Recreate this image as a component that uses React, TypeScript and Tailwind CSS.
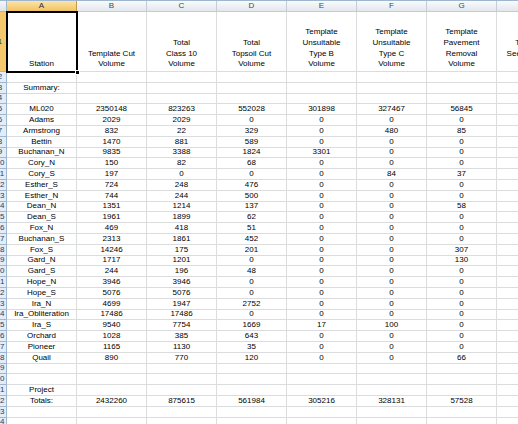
const COLS = ["A", "B", "C", "D", "E", "F", "G", "H"];

const HEADERS: string[][] = [
  ["Station"],
  ["Template Cut", "Volume"],
  ["Total", "Class 10", "Volume"],
  ["Total", "Topsoil Cut", "Volume"],
  ["Template", "Unsuitable", "Type B", "Volume"],
  ["Template", "Unsuitable", "Type C", "Volume"],
  ["Template", "Pavement", "Removal", "Volume"],
  ["Template", "Seed & Mulch", "Area"],
];

const DATA: (string | number)[][] = [
  [],
  ["Summary:"],
  [],
  ["ML020", 2350148, 823263, 552028, 301898, 327467, 56845],
  ["Adams", 2029, 2029, 0, 0, 0, 0],
  ["Armstrong", 832, 22, 329, 0, 480, 85],
  ["Bettin", 1470, 881, 589, 0, 0, 0],
  ["Buchanan_N", 9835, 3388, 1824, 3301, 0, 0],
  ["Cory_N", 150, 82, 68, 0, 0, 0],
  ["Cory_S", 197, 0, 0, 0, 84, 37],
  ["Esther_S", 724, 248, 476, 0, 0, 0],
  ["Esther_N", 744, 244, 500, 0, 0, 0],
  ["Dean_N", 1351, 1214, 137, 0, 0, 58],
  ["Dean_S", 1961, 1899, 62, 0, 0, 0],
  ["Fox_N", 469, 418, 51, 0, 0, 0],
  ["Buchanan_S", 2313, 1861, 452, 0, 0, 0],
  ["Fox_S", 14246, 175, 201, 0, 0, 307],
  ["Gard_N", 1717, 1201, 0, 0, 0, 130],
  ["Gard_S", 244, 196, 48, 0, 0, 0],
  ["Hope_N", 3946, 3946, 0, 0, 0, 0],
  ["Hope_S", 5076, 5076, 0, 0, 0, 0],
  ["Ira_N", 4699, 1947, 2752, 0, 0, 0],
  ["Ira_Obliteration", 17486, 17486, 0, 0, 0, 0],
  ["Ira_S", 9540, 7754, 1669, 17, 100, 0],
  ["Orchard", 1028, 385, 643, 0, 0, 0],
  ["Pioneer", 1165, 1130, 35, 0, 0, 0],
  ["Quail", 890, 770, 120, 0, 0, 66],
  [],
  [],
  ["Project"],
  ["Totals:", 2432260, 875615, 561984, 305216, 328131, 57528],
  [],
  [],
];

function RowHead({ n, selected }: { n: number; selected?: boolean }) {
  return (
    <div
      className={`w-[7px] shrink-0 overflow-hidden border-r border-b border-[#9eb6ce] flex items-center ${
        selected ? "bg-[#f5c96b]" : "bg-[#e4ecf7]"
      }`}
    >
      <div className="w-[14px] -ml-[7px] shrink-0 text-center text-[8px] leading-none text-[#27415f]">{n}</div>
    </div>
  );
}

export default function App() {
  return (
    <div
      className="relative w-[518px] h-[424px] overflow-hidden bg-white text-black"
      style={{ fontFamily: '"Liberation Sans", Arial, sans-serif' }}
    >
      {/* column letters */}
      <div className="flex h-[12px] border-t border-[#9eb6ce]">
        <div className="w-[7px] shrink-0 border-r border-b border-[#9eb6ce] bg-gradient-to-b from-[#f3f5f8] to-[#dfe4eb]" />
        {COLS.map((c, i) => (
          <div
            key={c}
            className={`w-[70px] shrink-0 border-r border-b flex items-center justify-center text-[8px] leading-none ${
              i === 0
                ? "bg-gradient-to-b from-[#fbe4aa] to-[#f2c25f] border-[#c29a4b] text-[#1e2a3a]"
                : "bg-gradient-to-b from-[#f9fafc] to-[#e3e7ed] border-[#c5ccd6] text-[#3b4a5d]"
            }`}
          >
            {c}
          </div>
        ))}
      </div>

      {/* header row 1 */}
      <div className="flex h-[60px]">
        <RowHead n={1} selected />
        {HEADERS.map((lines, i) => (
          <div
            key={i}
            className="w-[70px] shrink-0 border-r border-b border-[#dadcdd] flex flex-col items-center justify-end pb-[1px] text-[8px] leading-[10.7px] whitespace-nowrap"
          >
            {lines.map((l, j) => (
              <span key={j}>{l}</span>
            ))}
          </div>
        ))}
      </div>

      {DATA.map((row, r) => (
        <div key={r} className="flex h-[10.8px]">
          <RowHead n={r + 2} />
          {COLS.map((_, c) => (
            <div
              key={c}
              className="w-[70px] shrink-0 border-r border-b border-[#dadcdd] flex items-center justify-center text-[8px] leading-none whitespace-nowrap"
            >
              {row[c] ?? ""}
            </div>
          ))}
        </div>
      ))}

      {/* active cell A1 */}
      <div className="absolute left-[6px] top-[11px] w-[72px] h-[62px] border-2 border-black pointer-events-none" />
      <div className="absolute left-[75px] top-[70px] w-[5px] h-[5px] bg-black border border-white" />
    </div>
  );
}
